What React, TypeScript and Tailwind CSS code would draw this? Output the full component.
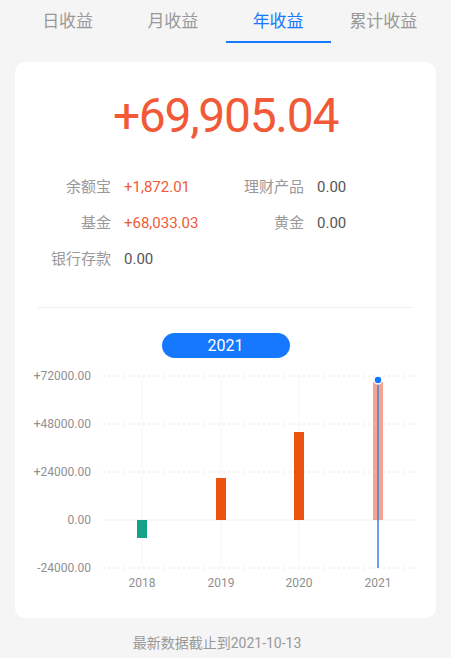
const font = { fontFamily: "Roboto, 'Noto Sans CJK SC', sans-serif" }

const tabs = ["日收益", "月收益", "年收益", "累计收益"]

const rows = [
  { label: "余额宝", value: "+1,872.01", red: true, label2: "理财产品", value2: "0.00" },
  { label: "基金", value: "+68,033.03", red: true, label2: "黄金", value2: "0.00" },
  { label: "银行存款", value: "0.00", red: false },
]

const yTicks = [
  { label: "+72000.00", y: 15 },
  { label: "+48000.00", y: 63 },
  { label: "+24000.00", y: 111 },
  { label: "0.00", y: 159 },
  { label: "-24000.00", y: 207 },
]

const bars = [
  { year: "2018", x: 127, top: 159, bottom: 177, color: "#13a18a" },
  { year: "2019", x: 206, top: 117, bottom: 159, color: "#ea540f" },
  { year: "2020", x: 284, top: 71, bottom: 159, color: "#ea540f" },
  { year: "2021", x: 363, top: 21, bottom: 159, color: "#f6a48b" },
]

function Chart() {
  return (
    <svg width="421" height="240" className="mt-[3px] block">
      {bars.map((b) => (
        <line key={"v" + b.year} x1={b.x} x2={b.x} y1={15} y2={207} stroke="#f6f6f6" strokeWidth="1" />
      ))}
      {yTicks.map((t) => (
        <g key={t.label}>
          <line
            x1={88}
            x2={402}
            y1={t.y}
            y2={t.y}
            stroke={t.label === "0.00" ? "#f0f0f0" : "#e6e6e6"}
            strokeWidth="1"
            strokeDasharray={t.label === "0.00" ? undefined : "2 3"}
          />
          <text x={76} y={t.y + 4} textAnchor="end" fontSize="12" fill="#8f8f8f" style={font}>
            {t.label}
          </text>
        </g>
      ))}
      {bars.map((b) => (
        <g key={b.year}>
          <rect x={b.x - 5} y={b.top} width={10} height={b.bottom - b.top} fill={b.color} />
          <text x={b.x} y={226} textAnchor="middle" fontSize="12" fill="#8f8f8f" style={font}>
            {b.year}
          </text>
        </g>
      ))}
      <line x1={363} x2={363} y1={19} y2={207} stroke="#3f7ff0" strokeWidth="1.5" />
      <circle cx={363} cy={19} r={4} fill="#1677ff" stroke="#ffffff" strokeWidth="1.5" />
    </svg>
  )
}

export default function App() {
  return (
    <div className="min-h-[658px] w-[451px] bg-[#f5f5f5]" style={font}>
      <div className="grid grid-cols-4 px-[15px]">
        {tabs.map((t, i) => (
          <div key={t} className="flex flex-col items-center pt-[9px]">
            <span className={"text-[17px] leading-[24px] " + (i === 2 ? "text-[#1677ff]" : "text-[#999999]")}>{t}</span>
            <div className={"mt-[8px] h-[2px] w-full " + (i === 2 ? "bg-[#1677ff]" : "bg-transparent")} />
          </div>
        ))}
      </div>

      <div className="mx-[15px] mt-[19px] rounded-[10px] bg-white pt-[30px] pb-[17px]">
        <div className="text-center text-[48px] leading-[48px] tracking-[-1.3px] text-[#f25a37]">+69,905.04</div>

        <div className="mt-[29px] grid grid-cols-[60px_107px_60px_1fr] gap-x-[13px] pl-[36px] text-[15px] leading-[36px]">
          {rows.map((r) => (
            <>
              <span key={r.label} className="text-right text-[#999999]">{r.label}</span>
              <span className={r.red ? "text-[#ef5a36]" : "text-[#555555]"}>{r.value}</span>
              <span className="text-right text-[#999999]">{r.label2 ?? ""}</span>
              <span className="text-[#555555]">{r.value2 ?? ""}</span>
            </>
          ))}
        </div>

        <div className="mx-[23px] mt-[30px] h-px bg-[#eeeeee]" />

        <div className="mt-[25px] flex justify-center">
          <div className="flex h-[25px] w-[128px] items-center justify-center rounded-full bg-[#1677ff] text-[16px] text-white">
            2021
          </div>
        </div>

        <Chart />
      </div>

      <div className="mt-[15px] pr-[17px] text-center text-[14px] leading-[20px] text-[#999999]">最新数据截止到2021-10-13</div>
    </div>
  )
}
